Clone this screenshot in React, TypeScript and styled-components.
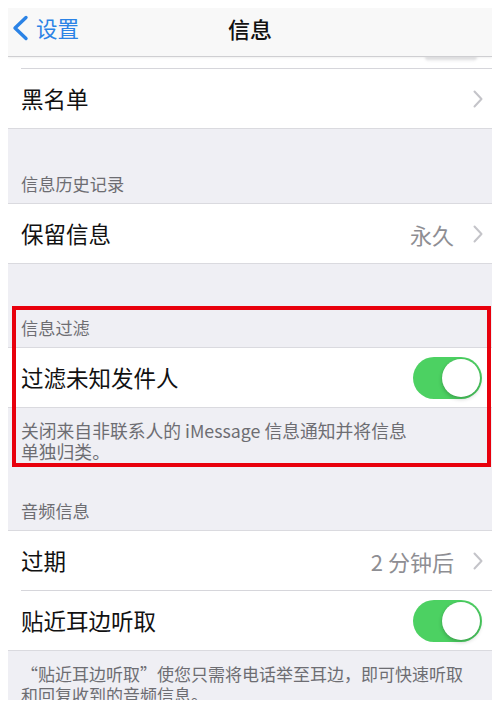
import { ReactNode } from "react";
import styled, { createGlobalStyle } from "styled-components";

const GlobalStyle = createGlobalStyle`
  html, body {
    margin: 0;
    padding: 0;
    background: #ffffff;
  }
  body {
    font-family: "Noto Sans CJK SC", "Noto Sans", "Liberation Sans", sans-serif;
  }
`;

const Screen = styled.div`
  width: 484px;
  height: 692px;
  margin: 8px 8px 0;
  background: #efeff4;
  overflow: hidden;
  display: flex;
  flex-direction: column;
`;

const NavBar = styled.div`
  height: 49px;
  box-sizing: border-box;
  padding-bottom: 8px;
  flex-shrink: 0;
  display: grid;
  grid-template-columns: 1fr auto 1fr;
  align-items: center;
  background: #f8f8f8;
  border-bottom: 1px solid #cfcfd2;
  box-shadow: 0 1px 2px rgba(0, 0, 0, 0.06);
  position: relative;
  z-index: 1;
`;

const BackButton = styled.div`
  display: flex;
  align-items: center;
  gap: 7px;
  padding-left: 4px;
  color: #2b83e6;
  font-size: 21.5px;
  line-height: 1;
`;

const Title = styled.div`
  font-size: 22px;
  font-weight: 500;
  color: #111;
  line-height: 1;
`;

const PartialRow = styled.div`
  height: 11px;
  flex-shrink: 0;
  background: #fff;
  display: flex;
  justify-content: flex-end;
  padding-right: 15px;
`;

const ToggleShadow = styled.div`
  width: 52px;
  height: 5px;
  border-radius: 0 0 26px 26px;
  background: linear-gradient(#d4d4d7, rgba(235, 235, 237, 0));
  filter: blur(1px);
`;

const Group = styled.div`
  background: #fff;
  border-top: 1px solid #dadadf;
  border-bottom: 1px solid #dadadf;
  flex-shrink: 0;
`;

const OpenGroup = styled(Group)`
  border-top: none;
`;

const Divider = styled.div`
  height: 1px;
  margin-left: 13px;
  background: #d6d6db;
`;

const Row = styled.div`
  height: 59px;
  display: flex;
  align-items: center;
  padding: 0 9px 0 13px;
  background: #fff;
`;

const Label = styled.div`
  flex: 1;
  font-size: 22.5px;
  color: #111;
  line-height: 1;
`;

const Value = styled.div`
  font-size: 22px;
  color: #8e8e93;
  line-height: 1;
  margin-right: 19px;
`;

const Header = styled.div<{ $height: number }>`
  height: ${(p) => p.$height}px;
  flex-shrink: 0;
  box-sizing: border-box;
  display: flex;
  align-items: flex-end;
  padding: 0 13px 8px;
  font-size: 17.2px;
  line-height: 22px;
  color: #6d6d72;
`;

const Gap = styled.div<{ $height: number }>`
  height: ${(p) => p.$height}px;
  flex-shrink: 0;
`;

const Footer = styled.div<{ $bottom: number; $size: number }>`
  padding: 12px 13px ${(p) => p.$bottom}px;
  font-size: ${(p) => p.$size}px;
  line-height: 21px;
  color: #6d6d72;
  white-space: nowrap;
  flex-shrink: 0;
`;

const Highlight = styled.div`
  position: relative;
  flex-shrink: 0;

  &::after {
    content: "";
    position: absolute;
    top: 0;
    bottom: 0;
    left: 4px;
    right: 1px;
    border: 4px solid #e8000c;
    pointer-events: none;
  }
`;

const Track = styled.div<{ $on: boolean }>`
  width: 69px;
  height: 42px;
  border-radius: 21px;
  background: ${(p) => (p.$on ? "#4cd162" : "#e5e5ea")};
  display: flex;
  align-items: center;
  justify-content: ${(p) => (p.$on ? "flex-end" : "flex-start")};
  padding: 0 2px;
  box-sizing: border-box;
  margin-right: 1px;
`;

const Knob = styled.div`
  width: 38px;
  height: 38px;
  border-radius: 50%;
  background: #fff;
  box-shadow: 0 2px 4px rgba(0, 0, 0, 0.22), 0 0 0 0.5px rgba(0, 0, 0, 0.06);
`;

const Chevron = () => (
  <svg width="10" height="18" viewBox="0 0 10 18">
    <polyline points="1.5,1.5 8.5,9 1.5,16.5" fill="none" stroke="#c4c4c9" strokeWidth="2" strokeLinecap="round" strokeLinejoin="round" />
  </svg>
);

const BackChevron = () => (
  <svg width="17" height="26" viewBox="0 0 17 26">
    <polyline points="14,2.5 3,13 14,23.5" fill="none" stroke="#2b83e6" strokeWidth="3.4" strokeLinecap="round" strokeLinejoin="round" />
  </svg>
);

const Toggle = ({ on }: { on: boolean }) => (
  <Track $on={on}>
    <Knob />
  </Track>
);

const LinkRow = ({ label, value }: { label: string; value?: string }) => (
  <Row>
    <Label>{label}</Label>
    {value && <Value>{value}</Value>}
    <Chevron />
  </Row>
);

const SwitchRow = ({ label, on }: { label: string; on: boolean }) => (
  <Row>
    <Label>{label}</Label>
    <Toggle on={on} />
  </Row>
);

const FooterText = ({ children, bottom, size }: { children: ReactNode; bottom: number; size: number }) => (
  <Footer $bottom={bottom} $size={size}>
    {children}
  </Footer>
);

export default function App() {
  return (
    <>
      <GlobalStyle />
      <Screen>
        <NavBar>
          <BackButton>
            <BackChevron />
            <span>设置</span>
          </BackButton>
          <Title>信息</Title>
          <div />
        </NavBar>

        <OpenGroup>
          <PartialRow>
            <ToggleShadow />
          </PartialRow>
          <Divider />
          <LinkRow label="黑名单" />
        </OpenGroup>

        <Header $height={74}>信息历史记录</Header>
        <Group>
          <LinkRow label="保留信息" value="永久" />
        </Group>

        <Gap $height={42} />
        <Highlight>
          <Header $height={41}>信息过滤</Header>
          <Group>
            <SwitchRow label="过滤未知发件人" on />
          </Group>
          <FooterText bottom={5} size={17.8}>
            关闭来自非联系人的 iMessage 信息通知并将信息
            <br />
            单独归类。
          </FooterText>
        </Highlight>

        <Header $height={63}>音频信息</Header>
        <Group>
          <LinkRow label="过期" value="2 分钟后" />
          <Divider />
          <SwitchRow label="贴近耳边听取" on />
        </Group>
        <FooterText bottom={12} size={17}>
          “贴近耳边听取”使您只需将电话举至耳边，即可快速听取
          <br />
          和回复收到的音频信息。
        </FooterText>
      </Screen>
    </>
  );
}
